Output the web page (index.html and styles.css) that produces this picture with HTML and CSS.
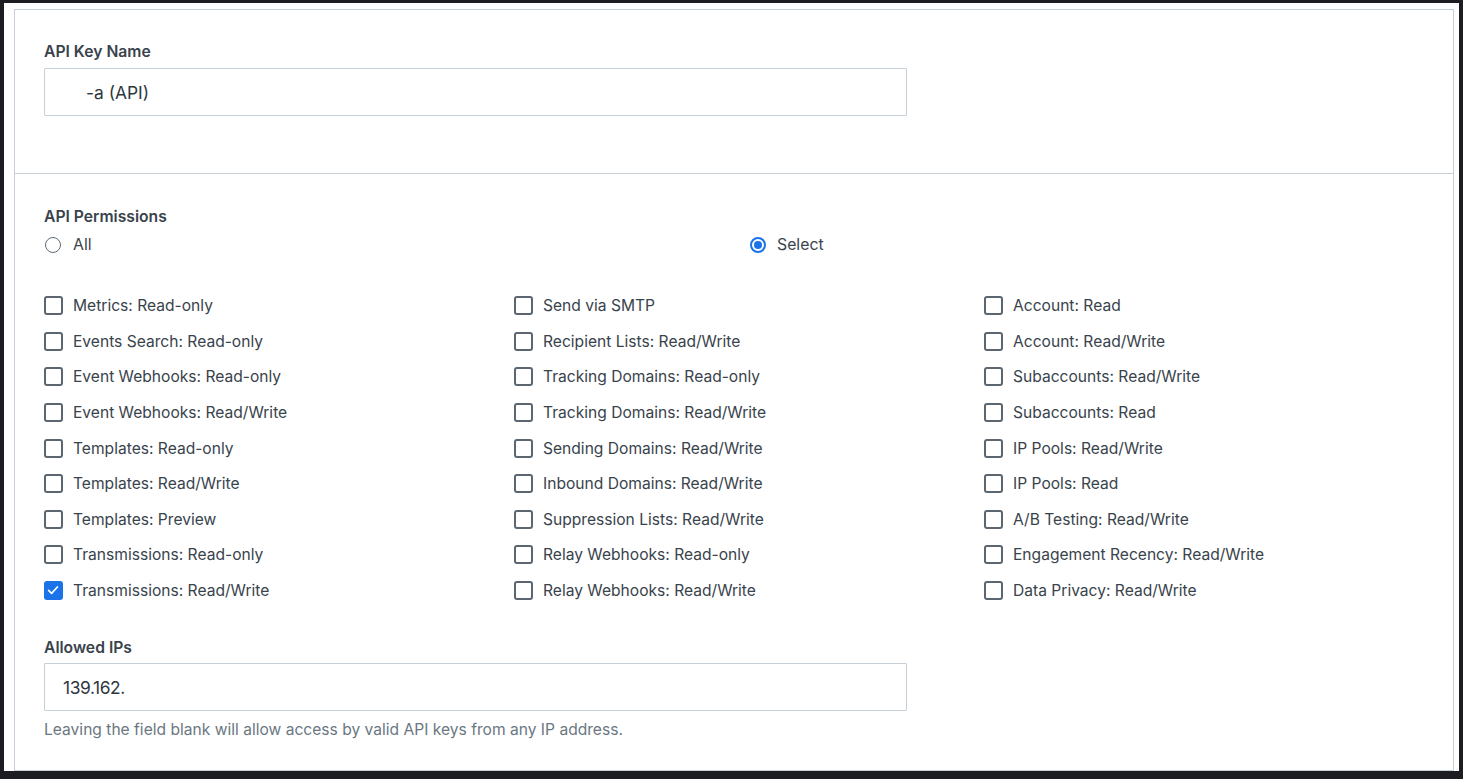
FILE: index.html
```html
<!DOCTYPE html>
<html>
<head>
<meta charset="utf-8">
<link rel="stylesheet" href="styles.css">
</head>
<body>
<div class="frame">
  <div class="panel">
    <section class="section first">
      <div class="label">API Key Name</div>
      <div class="field"><span class="name-value">-a (API)</span></div>
    </section>
    <section class="section second">
      <div class="label">API Permissions</div>
      <div class="radios">
        <label class="radio"><span class="dot"></span>All</label>
        <label class="radio on"><span class="dot"></span>Select</label>
      </div>
      <div class="checks">
        <div class="col">
          <label class="check"><span class="box"></span>Metrics: Read-only</label>
          <label class="check"><span class="box"></span>Events Search: Read-only</label>
          <label class="check"><span class="box"></span>Event Webhooks: Read-only</label>
          <label class="check"><span class="box"></span>Event Webhooks: Read/Write</label>
          <label class="check"><span class="box"></span>Templates: Read-only</label>
          <label class="check"><span class="box"></span>Templates: Read/Write</label>
          <label class="check"><span class="box"></span>Templates: Preview</label>
          <label class="check"><span class="box"></span>Transmissions: Read-only</label>
          <label class="check on"><span class="box"><svg viewBox="0 0 18 18" width="18" height="18"><path d="M4.6 9.3l3 3 5.8-6.3" fill="none" stroke="#fff" stroke-width="1.7" stroke-linecap="round" stroke-linejoin="round"/></svg></span>Transmissions: Read/Write</label>
        </div>
        <div class="col">
          <label class="check"><span class="box"></span>Send via SMTP</label>
          <label class="check"><span class="box"></span>Recipient Lists: Read/Write</label>
          <label class="check"><span class="box"></span>Tracking Domains: Read-only</label>
          <label class="check"><span class="box"></span>Tracking Domains: Read/Write</label>
          <label class="check"><span class="box"></span>Sending Domains: Read/Write</label>
          <label class="check"><span class="box"></span>Inbound Domains: Read/Write</label>
          <label class="check"><span class="box"></span>Suppression Lists: Read/Write</label>
          <label class="check"><span class="box"></span>Relay Webhooks: Read-only</label>
          <label class="check"><span class="box"></span>Relay Webhooks: Read/Write</label>
        </div>
        <div class="col">
          <label class="check"><span class="box"></span>Account: Read</label>
          <label class="check"><span class="box"></span>Account: Read/Write</label>
          <label class="check"><span class="box"></span>Subaccounts: Read/Write</label>
          <label class="check"><span class="box"></span>Subaccounts: Read</label>
          <label class="check"><span class="box"></span>IP Pools: Read/Write</label>
          <label class="check"><span class="box"></span>IP Pools: Read</label>
          <label class="check"><span class="box"></span>A/B Testing: Read/Write</label>
          <label class="check"><span class="box"></span>Engagement Recency: Read/Write</label>
          <label class="check"><span class="box"></span>Data Privacy: Read/Write</label>
        </div>
      </div>
      <div class="label ips">Allowed IPs</div>
      <div class="field"><span class="ip-value">139.162.</span></div>
      <div class="help">Leaving the field blank will allow access by valid API keys from any IP address.</div>
    </section>
  </div>
</div>
</body>
</html>
```

FILE: styles.css
```css
html, body {
  margin: 0;
  padding: 0;
}
body {
  background: #1c1c21;
  height: 779px;
  overflow: hidden;
  font-family: Inter, "Noto Sans", "Liberation Sans", sans-serif;
  color: #39434c;
}
.frame {
  margin: 3px 4px 0 4px;
  background: #fff;
  padding: 6px 5px 0 10px;
  height: 768px;
  box-sizing: border-box;
}
.panel {
  border: 1px solid #c8d0d7;
  border-bottom: none;
}
.section {
  padding: 32px 29px 0 29px;
}
.section.first {
  height: 163px;
  box-sizing: border-box;
}
.section.second {
  border-top: 1px solid #c8d0d7;
  border-bottom: 1px solid #c8d0d7;
  padding-bottom: 30px;
}
.label {
  font-size: 15.7px;
  font-weight: 600;
  line-height: 20px;
  color: #39434c;
  margin-bottom: 6px;
}
.field {
  width: 863px;
  height: 48px;
  box-sizing: border-box;
  border: 1px solid #c8d0d7;
  border-radius: 1px;
  display: flex;
  align-items: center;
  font-size: 17.4px;
  color: #2f3840;
}
.name-value {
  padding-left: 41px;
}
.ip-value {
  padding-left: 18px;
  letter-spacing: -0.4px;
}
.second .label {
  margin-top: 1px;
  margin-bottom: 8px;
}
.second .label.ips {
  margin-top: 30px;
  margin-bottom: 5px;
}
.radios {
  display: grid;
  grid-template-columns: 705px 1fr;
  height: 20px;
}
.radio {
  display: flex;
  align-items: center;
  font-size: 15.8px;
  line-height: 20px;
  color: #39434c;
}
.radio .dot {
  width: 16px;
  height: 16px;
  box-sizing: border-box;
  border: 1.5px solid #5f6b75;
  border-radius: 50%;
  margin: 0 12px 0 1px;
  position: relative;
}
.radio.on .dot {
  margin-left: 1px;
  margin-right: 11px;
  border: 2px solid #1a73e8;
}
.radio.on .dot::after {
  content: "";
  position: absolute;
  left: 2px;
  top: 2px;
  width: 8px;
  height: 8px;
  border-radius: 50%;
  background: #1a73e8;
}
.checks {
  display: grid;
  grid-template-columns: 470px 470px 1fr;
  margin-top: 33px;
}
.col {
  display: flex;
  flex-direction: column;
}
.check {
  display: flex;
  align-items: center;
  height: 35.6px;
  font-size: 15.6px;
  color: #39434c;
}
.check .box {
  width: 19px;
  height: 19px;
  box-sizing: border-box;
  border: 2px solid #5b6670;
  border-radius: 3px;
  margin-right: 10px;
  display: flex;
}
.check.on .box {
  border: none;
  background: #1a73e8;
}
.check .box svg {
  display: block;
}
.help {
  margin-top: 9px;
  font-size: 15.6px;
  line-height: 20px;
  color: #6b7782;
}
```
